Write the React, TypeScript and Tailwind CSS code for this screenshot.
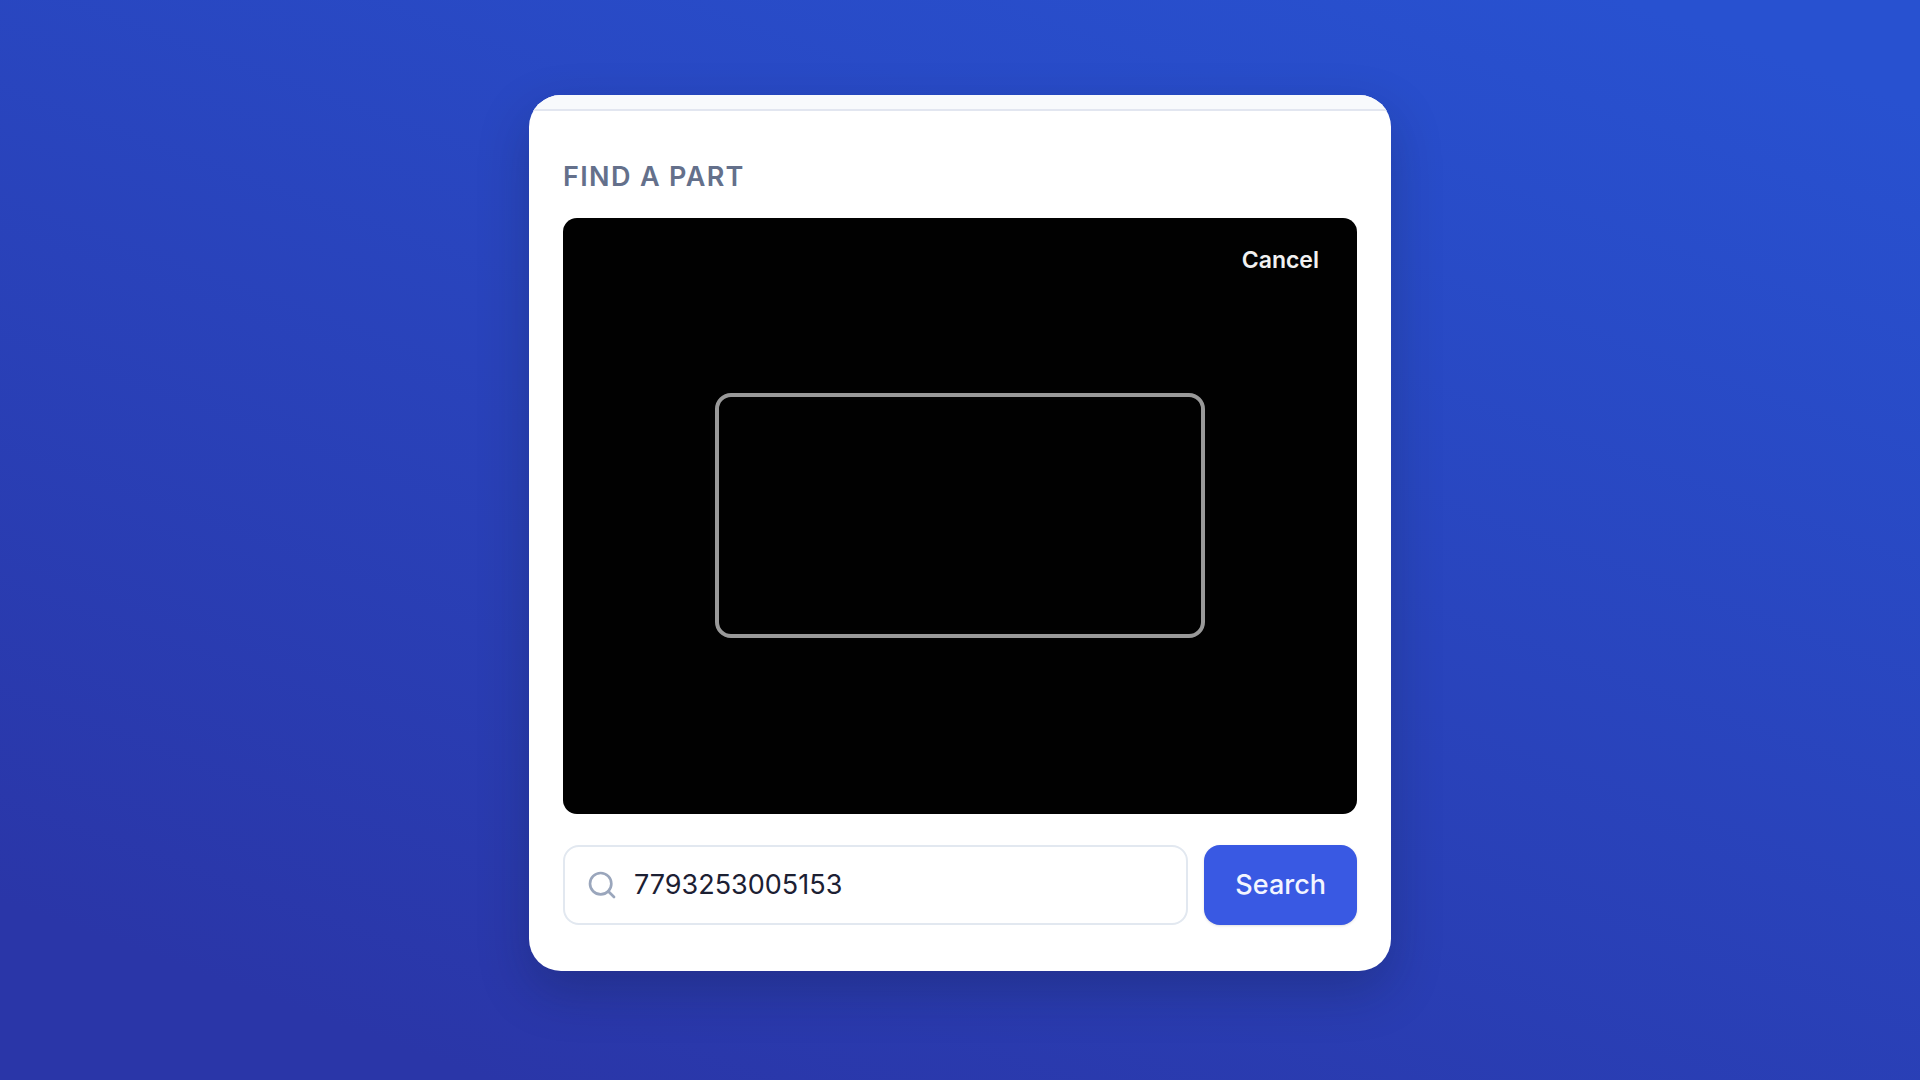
import React from 'react'
import { Search } from 'lucide-react'

const App = () => {
  const [query, setQuery] = React.useState<string>('7793253005153')
  const [scanning, setScanning] = React.useState<boolean>(true)

  return (
    <div className="min-h-screen bg-[linear-gradient(200deg,#2851d0_0%,#2851d0_6%,#2a36a8_90%)] px-8 pt-[95px] pb-8 font-['Inter',sans-serif]">
      <main className="mx-auto w-full max-w-[862px] overflow-hidden rounded-[32px] bg-white shadow-[0_20px_50px_rgba(15,23,42,0.25)]">
        <div className="h-4 border-b-2 border-[#e2e6f0] bg-[#f8fafc]" />

        <section className="px-[34px] pt-[46px] pb-[46px]">
          <h1 className="mb-[21px] text-[27px] leading-10 font-semibold tracking-wider text-[#64708b] uppercase">
            Find a part
          </h1>

          {/* camera viewfinder */}
          {scanning && (
            <div className="relative mb-[31px] flex aspect-[4/3] w-full items-center justify-center rounded-[14px] bg-[#010101]">
              <div className="h-[245px] w-[490px] rounded-2xl border-4 border-[#999999]" />
              <button
                type="button"
                className="absolute top-[18px] right-4 rounded-lg px-[22px] py-2 text-[23px] leading-8 font-semibold text-[#f1f1f1]"
                onClick={() => setScanning(false)}
              >
                Cancel
              </button>
            </div>
          )}

          <form className="flex gap-4" onSubmit={(e) => e.preventDefault()}>
            <label className="flex h-20 min-w-0 flex-1 items-center gap-4 rounded-2xl border-2 border-[#e2e8f0] px-[21px]">
              <Search className="size-8 shrink-0 text-[#9aa6bc]" strokeWidth={2} />
              <input
                type="text"
                aria-label="Part number"
                className="w-full min-w-0 bg-transparent text-[27px] leading-10 text-[#1c2033] outline-none"
                value={query}
                onChange={(e) => setQuery(e.target.value)}
              />
            </label>
            <button
              type="submit"
              className="h-20 rounded-2xl bg-[#3959e3] px-[31px] text-[27px] leading-10 font-medium text-[#f3f5ff] shadow-sm"
            >
              Search
            </button>
          </form>
        </section>
      </main>
    </div>
  )
}

export default App
